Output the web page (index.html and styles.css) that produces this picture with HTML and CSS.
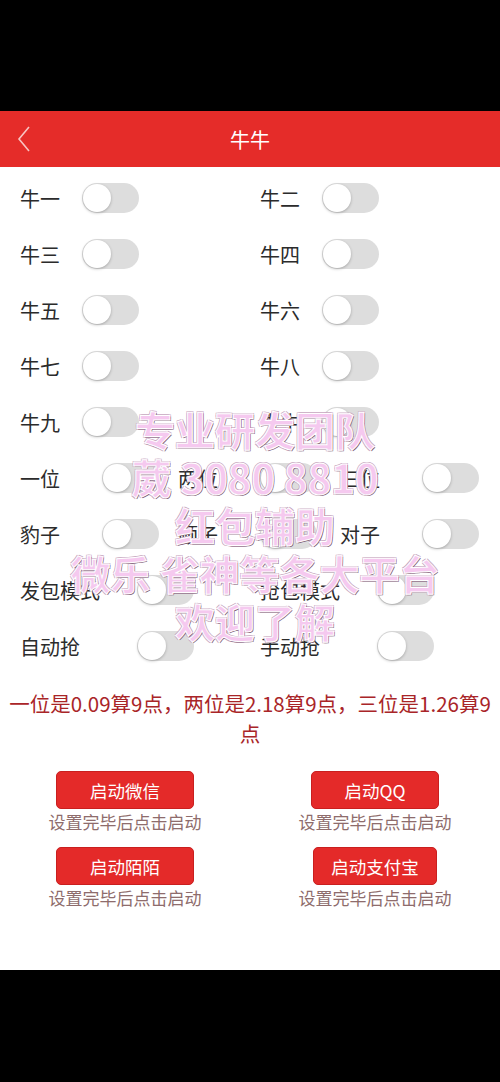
FILE: index.html
```html
<!DOCTYPE html>
<html lang="zh">
<head>
	<meta charset="UTF-8">
	<title>牛牛</title>
	<link rel="stylesheet" href="styles.css">
</head>
<body>
	<div class="phone-top"></div>
	<div class="header">
		<svg class="back" width="14" height="26" viewBox="0 0 14 26">
			<polyline points="12,1 2,13 12,25" fill="none" stroke="#f8c4c2" stroke-width="1.6"/>
		</svg>
		<h1>牛牛</h1>
	</div>
	<div class="main">
		<div class="rows two">
			<div class="item"><span class="label">牛一</span><span class="toggle"></span></div>
			<div class="item"><span class="label">牛二</span><span class="toggle"></span></div>
			<div class="item"><span class="label">牛三</span><span class="toggle"></span></div>
			<div class="item"><span class="label">牛四</span><span class="toggle"></span></div>
			<div class="item"><span class="label">牛五</span><span class="toggle"></span></div>
			<div class="item"><span class="label">牛六</span><span class="toggle"></span></div>
			<div class="item"><span class="label">牛七</span><span class="toggle"></span></div>
			<div class="item"><span class="label">牛八</span><span class="toggle"></span></div>
			<div class="item"><span class="label">牛九</span><span class="toggle"></span></div>
			<div class="item"><span class="label">牛牛</span><span class="toggle"></span></div>
		</div>
		<div class="rows three">
			<div class="item"><span class="label">一位</span><span class="toggle"></span></div>
			<div class="item"><span class="label">两位</span><span class="toggle"></span></div>
			<div class="item"><span class="label">三位</span><span class="toggle"></span></div>
			<div class="item"><span class="label">豹子</span><span class="toggle"></span></div>
			<div class="item"><span class="label">顺子</span><span class="toggle"></span></div>
			<div class="item"><span class="label">对子</span><span class="toggle"></span></div>
		</div>
		<div class="rows wide">
			<div class="item"><span class="label">发包模式</span><span class="toggle"></span></div>
			<div class="item"><span class="label">抢包模式</span><span class="toggle"></span></div>
			<div class="item"><span class="label">自动抢</span><span class="toggle"></span></div>
			<div class="item"><span class="label">手动抢</span><span class="toggle"></span></div>
		</div>

		<p class="note">一位是0.09算9点，两位是2.18算9点，三位是1.26算9点</p>

		<div class="launch">
			<div class="cell">
				<button type="button">启动微信</button>
				<div class="tip">设置完毕后点击启动</div>
			</div>
			<div class="cell">
				<button type="button">启动QQ</button>
				<div class="tip">设置完毕后点击启动</div>
			</div>
			<div class="cell">
				<button type="button">启动陌陌</button>
				<div class="tip">设置完毕后点击启动</div>
			</div>
			<div class="cell">
				<button type="button" class="narrow">启动支付宝</button>
				<div class="tip">设置完毕后点击启动</div>
			</div>
		</div>

		<!-- 水印 -->
		<div class="watermark">
			<div>专业研发团队</div>
			<div>葳 3080 8810</div>
			<div>红包辅助</div>
			<div>微乐 雀神等各大平台</div>
			<div>欢迎了解</div>
		</div>
	</div>
</body>
</html>
```

FILE: styles.css
```css
body {
	margin: 0;
	background: #000;
	font-family: "Noto Sans CJK SC", "Noto Sans", sans-serif;
}
div.phone-top {
	height: 111px;
}
div.header {
	height: 56px;
	background: #e52c29;
	display: flex;
	align-items: center;
	justify-content: center;
	position: relative;
}
div.header h1 {
	margin: 0;
	color: #fff;
	font-size: 20px;
	font-weight: normal;
}
div.header .back {
	position: absolute;
	left: 17px;
	top: 15px;
}
div.main {
	background: #fff;
	height: 803px;
	position: relative;
	padding-top: 3px;
	box-sizing: border-box;
}
div.rows {
	display: grid;
	padding-left: 20px;
}
div.rows.two {
	grid-template-columns: 240px 240px;
}
div.rows.three {
	grid-template-columns: 158px 162px 160px;
}
div.rows.wide {
	grid-template-columns: 240px 240px;
}
div.item {
	height: 56px;
	display: flex;
	align-items: center;
}
.label {
	font-size: 20px;
	color: #2b2b2b;
	white-space: nowrap;
}
.two .label {
	width: 62px;
}
.three .label {
	width: 82px;
}
.wide .label {
	width: 117px;
}
.toggle {
	width: 57px;
	height: 30px;
	border-radius: 15px;
	background: #dddddd;
	position: relative;
}
.toggle::before {
	content: "";
	position: absolute;
	left: 1px;
	top: 1px;
	width: 28px;
	height: 28px;
	border-radius: 50%;
	background: #fff;
	box-shadow: 0 1px 3px rgba(0, 0, 0, 0.25);
}
p.note {
	margin: 14px 0 0;
	padding: 0 6px;
	text-align: center;
	font-size: 20.5px;
	line-height: 30px;
	color: #a92528;
}
div.launch {
	display: grid;
	grid-template-columns: 1fr 1fr;
	margin-top: 23px;
}
div.cell {
	text-align: center;
	height: 76px;
}
div.cell button {
	height: 38px;
	padding: 0 33px;
	border: 1px solid #c91f1f;
	border-radius: 5px;
	background: #e42a29;
	color: #fff;
	font-family: inherit;
	font-size: 17.5px;
}
div.cell button.narrow {
	padding: 0 17px;
}
div.tip {
	font-size: 17px;
	line-height: 26px;
	color: #8e6c6c;
}
div.watermark {
	position: absolute;
	left: 10px;
	right: 0;
	top: 238px;
	text-align: center;
	font-size: 40px;
	font-weight: bold;
	line-height: 48px;
	color: #f5c9ef;
	-webkit-text-stroke: 1px #fff;
	text-shadow: 1px 1px 0 #7d5d74, -1px -1px 0 #c7a7bf, 1px -1px 0 #c7a7bf, -1px 1px 0 #c7a7bf;
}
```
